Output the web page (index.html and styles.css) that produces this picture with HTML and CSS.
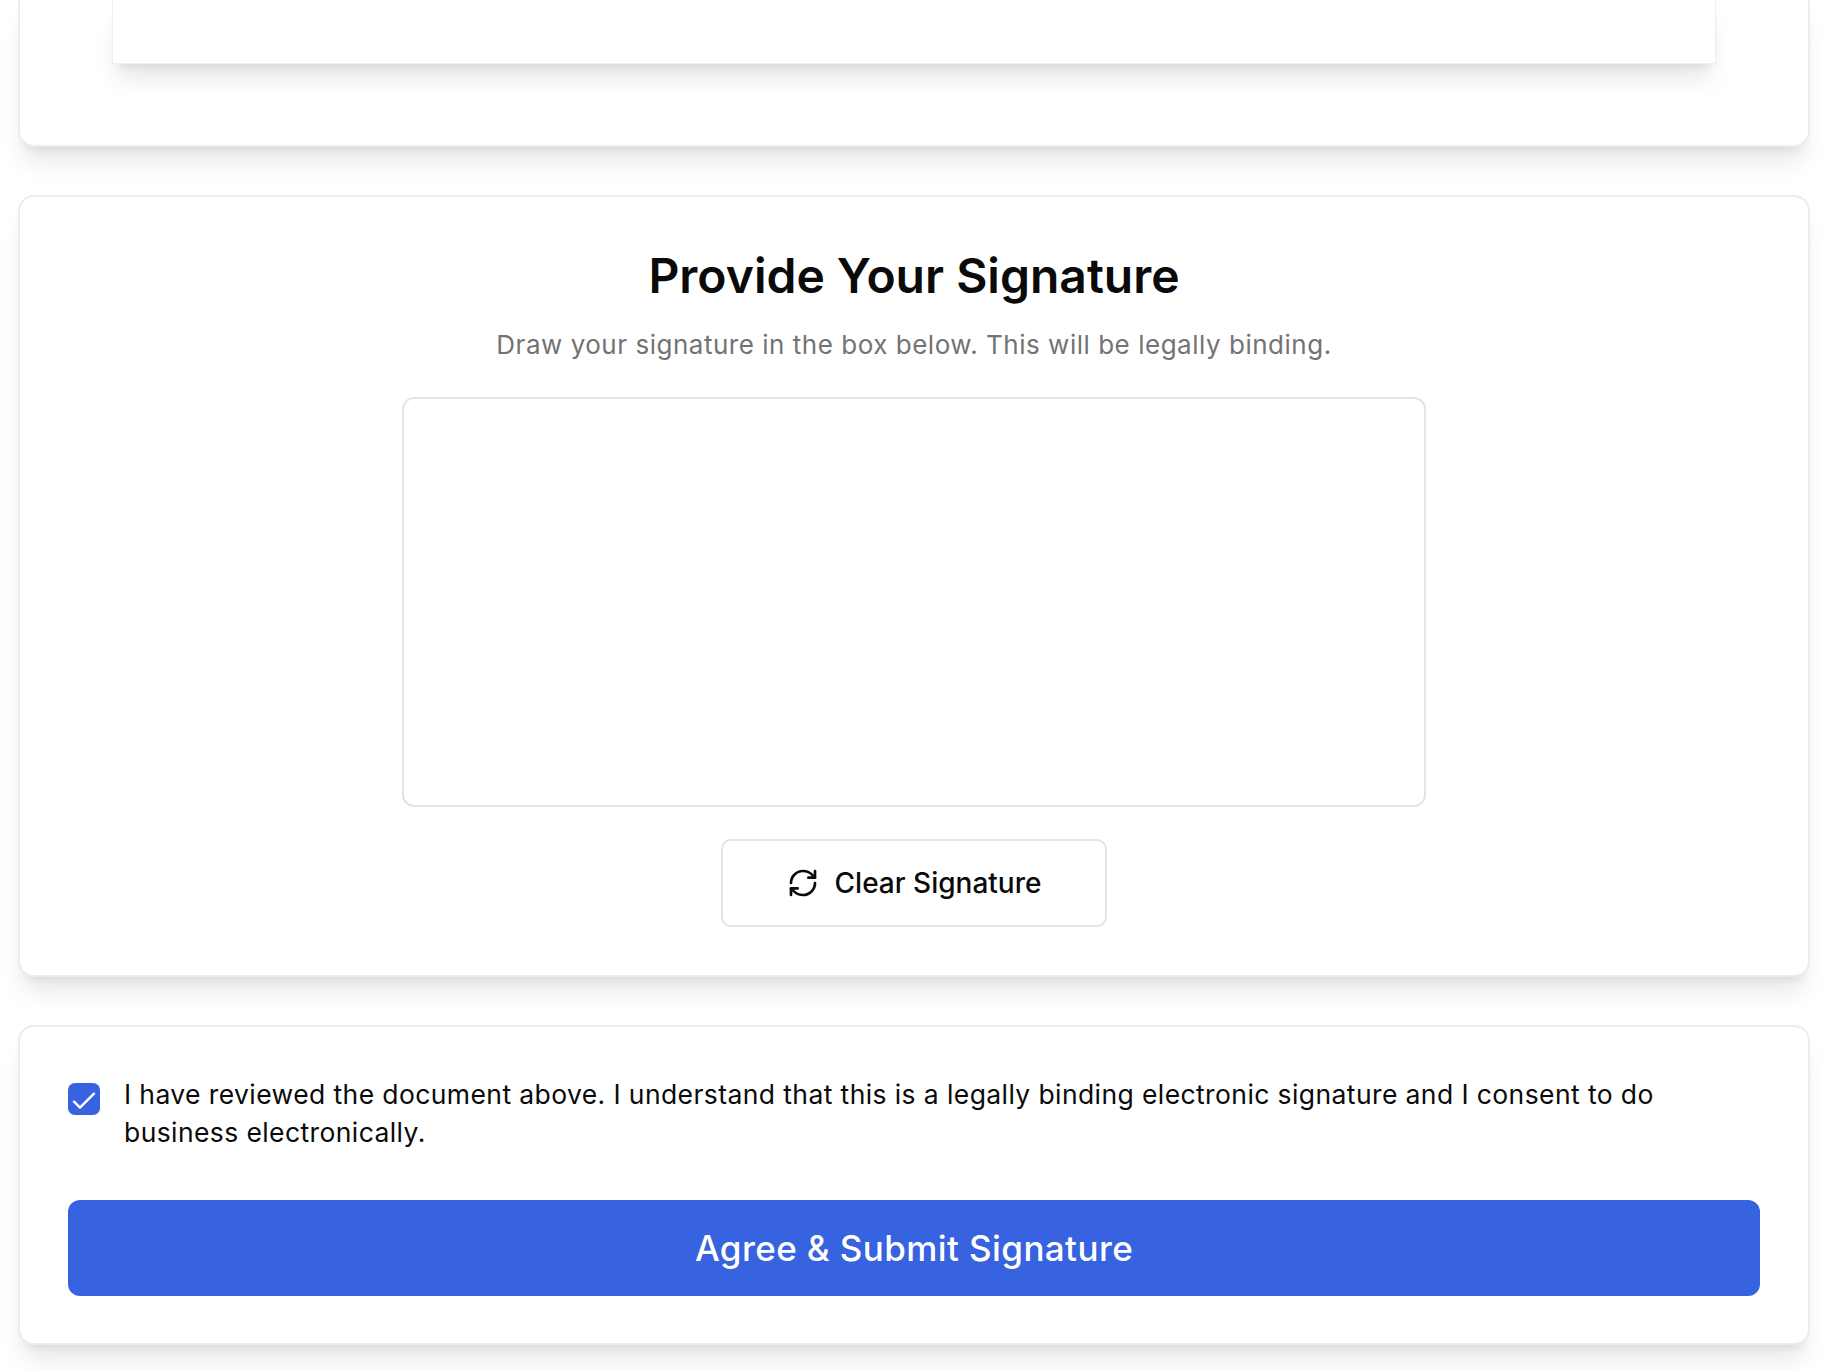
FILE: index.html
```html
<!DOCTYPE html>
<html lang="en">
<head>
<meta charset="utf-8">
<title>Provide Your Signature</title>
<link rel="stylesheet" href="styles.css">
</head>
<body>
<main class="page">
  <section class="card card-document">
    <div class="paper"></div>
  </section>
  <section class="card card-signature">
    <h1 class="title">Provide Your Signature</h1>
    <p class="subtitle">Draw your signature in the box below. This will be legally binding.</p>
    <div class="pad"></div>
    <button class="clear" type="button">
      <svg class="clear-icon" viewBox="0 0 24 24" fill="none" stroke="currentColor" stroke-width="2" stroke-linecap="round" stroke-linejoin="round"><path d="M3 12a9 9 0 0 1 9-9 9.75 9.75 0 0 1 6.74 2.74L21 8"/><path d="M21 3v5h-5"/><path d="M21 12a9 9 0 0 1-9 9 9.75 9.75 0 0 1-6.74-2.74L3 16"/><path d="M8 16H3v5"/></svg>
      <span>Clear Signature</span>
    </button>
  </section>
  <section class="card card-consent">
    <label class="consent">
      <span class="check"><svg viewBox="0 0 24 24" fill="none" stroke="#fff" stroke-width="1.8" stroke-linecap="round" stroke-linejoin="round"><path d="M4.5 14l4.5 4.5L19.5 8"/></svg></span>
      <span class="consent-text">I have reviewed the document above. I understand that this is a legally binding electronic signature and I consent to do business electronically.</span>
    </label>
    <button class="submit" type="button">Agree &amp; Submit Signature</button>
  </section>
</main>
</body>
</html>
```
FILE: styles.css
```css
* { box-sizing: border-box; }
html, body { margin: 0; padding: 0; background: #fff; }
body { font-family: Inter, "Liberation Sans", sans-serif; color: #0a0a0a; overflow: hidden; height: 1370px; }
.page { display: flex; flex-direction: column; gap: 48px; padding: 0 16px 0 18px; }
.card {
  background: #fff;
  border: 2px solid #ececec;
  border-radius: 16px;
  box-shadow: 0 20px 25px -5px rgba(0,0,0,.09), 0 8px 10px -6px rgba(0,0,0,.09);
}
.card-document { height: 147px; border-top: 0; border-radius: 0 0 16px 16px; padding: 0 92px; }
.paper {
  height: 64px;
  background: #fff;
  border: 1px solid #eeeeee;
  border-top: 0;
  box-shadow: 0 20px 25px -5px rgba(0,0,0,.09), 0 8px 10px -6px rgba(0,0,0,.09);
}
.card-signature { height: 782px; display: flex; flex-direction: column; align-items: center; padding-top: 51px; }
.title { margin: 0; font-size: 48px; line-height: 56px; font-weight: 600; }
.subtitle { margin: 23px 0 0; font-size: 26px; line-height: 36px; color: #737373; letter-spacing: .52px; }
.pad { width: 1024px; height: 410px; margin-top: 34px; border: 2px solid #e4e4e4; border-radius: 12px; background: #fff; flex: none; }
.clear {
  display: flex; align-items: center; justify-content: center; gap: 16px;
  width: 386px; height: 88px; margin-top: 32px;
  background: #fff; border: 2px solid #e4e4e4; border-radius: 10px;
  font: 500 28px Inter, "Liberation Sans", sans-serif; color: #0a0a0a;
}
.clear-icon { width: 32px; height: 32px; flex: none; }
.card-consent { height: 320px; padding: 49px 48px 0; }
.consent { display: flex; gap: 24px; align-items: flex-start; }
.check { flex: none; width: 32px; height: 32px; margin-top: 7px; border-radius: 7px; background: #3762e0; display: flex; }
.check svg { width: 100%; height: 100%; }
.consent-text { font-size: 26.5px; line-height: 38px; color: #0a0a0a; letter-spacing: .4px; margin-top: -1px; padding-right: 12px; }
.submit {
  display: block; width: 100%; height: 96px; margin-top: 49px;
  background: #3762e0; border: 0; border-radius: 12px; color: #fff;
  font: 500 35px Inter, "Liberation Sans", sans-serif; letter-spacing: .4px;
}
```
